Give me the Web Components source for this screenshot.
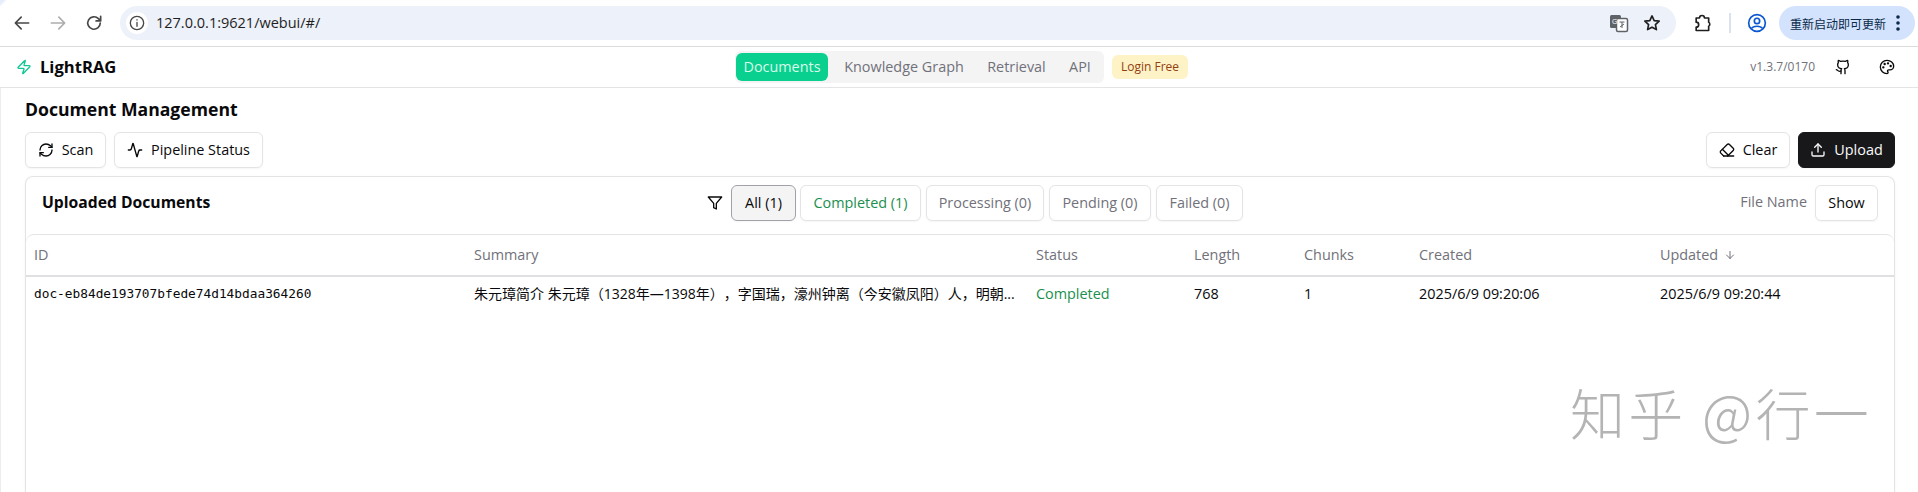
<!DOCTYPE html>
<html><head><meta charset="utf-8"><style>
html,body{margin:0;padding:0;background:#fff;height:100%;overflow:hidden}
body{font-family:"Open Sans","Noto Sans CJK SC",sans-serif;color:#09090b;width:1918px;height:492px;position:relative}
</style></head><body>
<browser-bar></browser-bar>
<app-header></app-header>
<doc-page></doc-page>
<water-mark>知乎 @行一</water-mark>
<script>
const ICON='fill="none" stroke="currentColor" stroke-width="2" stroke-linecap="round" stroke-linejoin="round"';
function define(name,html){customElements.define(name,class extends HTMLElement{constructor(){super();this.attachShadow({mode:'open'}).innerHTML=html;}});}
define('browser-bar',`<style>
:host{display:flex;align-items:center;height:46px;border-bottom:1px solid #dcdcdc;background:#fff;padding-left:12px;color:#474747;position:relative}
.n{width:20px;height:20px;margin-right:16px;flex:none}
.pill{flex:none;width:1556px;height:34px;border-radius:17px;background:#edf1f9;display:flex;align-items:center;padding:0 0 0 6px;box-sizing:border-box}
.info{width:22px;height:22px;border-radius:50%;background:#fff;display:flex;align-items:center;justify-content:center;flex:none}
.url{margin-left:8px;font:14.5px "Open Sans",sans-serif;color:#1f1f1f;flex:1;padding-bottom:1px}
.pi{width:20px;height:20px;flex:none}
.sq{width:2px;height:20px;background:#d9e2ee;margin:0 16px 0 17px}
.upd{margin-left:12px;width:136px;height:34px;border-radius:17px;background:#d3e3fd;display:flex;align-items:center;padding-left:11px;box-sizing:border-box;font:12px "Noto Sans CJK SC",sans-serif;color:#0b2a4a}
.corner{position:absolute;left:0;top:0;width:8px;height:6px;background:linear-gradient(135deg,#e6eefb 0 30%,transparent 55%)}
</style><span class="corner"></span>
<svg class="n" viewBox="0 0 24 24" ${ICON}><path d="M20 12H5M11 5l-7 7 7 7"/></svg>
<svg class="n" style="color:#adadad" viewBox="0 0 24 24" ${ICON}><path d="M4 12h15M13 5l7 7-7 7"/></svg>
<svg class="n" viewBox="0 0 24 24" ${ICON}><path d="M19.5 12a7.5 7.5 0 1 1-2.2-5.3L20 9.5M20 4v5.5h-5.5"/></svg>
<div class="pill"><span class="info"><svg width="16" height="16" viewBox="0 0 24 24" ${ICON}><circle cx="12" cy="12" r="10"/><path d="M12 11v6M12 7v.5"/></svg></span><span class="url">127.0.0.1:9621/webui/#/</span>
<svg class="pi" style="margin-right:13px" viewBox="0 0 20 20"><rect x="1" y="2" width="11" height="13" rx="1.5" fill="#5f6368"/><rect x="7.5" y="5.5" width="11" height="13" rx="1.5" fill="#fff" stroke="#5f6368" stroke-width="1.5"/><text x="3" y="11" font-size="7" fill="#fff" font-family="Liberation Sans">G</text><path d="M10.5 9h5M13 9v6M11 14l4-3" stroke="#5f6368" fill="none"/></svg>
<svg class="pi" style="margin-right:14px" viewBox="0 0 24 24" fill="none" stroke="#1f1f1f" stroke-width="2" stroke-linejoin="round"><path d="M12 3.5l2.6 5.6 6 .7-4.5 4.1 1.2 6L12 17l-5.3 2.9 1.2-6-4.5-4.1 6-.7z"/></svg></div>
<svg class="pi" style="margin-left:16px" viewBox="0 0 24 24" fill="none" stroke="#1f1f1f" stroke-width="2" stroke-linejoin="round"><path d="M5 6h4a3 3 0 0 1 6 0h5v5a3 3 0 0 1 0 5v5H5v-4a3 3 0 0 0 0-6z"/></svg>
<span class="sq"></span>
<svg class="pi" viewBox="0 0 24 24" fill="none" stroke="#0b57d0" stroke-width="2"><circle cx="12" cy="12" r="10"/><circle cx="12" cy="9.5" r="3.2"/><path d="M5.5 18.5c2-3.500 11-3.500 13 0"/></svg>
<div class="upd">重新启动即可更新<svg style="margin-left:4px" width="16" height="20" viewBox="0 0 16 20" fill="#0b2a4a"><circle cx="8" cy="4" r="1.800"/><circle cx="8" cy="10" r="1.800"/><circle cx="8" cy="16" r="1.800"/></svg></div>`);

define('nav-tab',`<style>
:host{display:inline-flex;align-items:center;justify-content:center;height:28px;box-sizing:border-box;padding-bottom:2px;border-radius:6px;font-size:14.4px;color:#71717a;margin-right:8px;white-space:nowrap;flex:none}
:host([active]){background:#0ad08f;color:#d8fbea}
</style><slot></slot>`);

define('app-header',`<style>
:host{display:flex;align-items:center;height:40px;border-bottom:1px solid #e4e4e7;position:relative;padding-left:16px}
.logo{display:flex;align-items:center;gap:8px;font-size:16.6px;font-weight:700;width:719px;flex:none}
.logo span{padding-bottom:2px}
.nav{display:flex;align-items:center;height:32px;padding:0 1px;background:#f4f4f5;border-radius:6px;width:369px;box-sizing:border-box}
.badge{margin-left:8px;height:24px;width:76px;box-sizing:border-box;padding-bottom:1px;display:flex;align-items:center;justify-content:center;background:#fef3c7;color:#92400e;border-radius:6px;font-size:12px}
.right{margin-left:auto;display:flex;align-items:center;color:#71717a;font-size:12px}
.right span{padding-bottom:2px;margin-right:1px}
.ic{color:#09090b;width:16px;height:16px;flex:none}
</style>
<div class="logo"><svg width="16" height="16" viewBox="0 0 24 24" fill="none" stroke="#10c795" stroke-width="2" stroke-linecap="round" stroke-linejoin="round"><path d="M4 14a1 1 0 0 1-.78-1.63l9.9-10.2a.5.5 0 0 1 .86.46l-1.920 6.020A1 1 0 0 0 13 10h7a1 1 0 0 1 .78 1.630l-9.900 10.200a.5.5 0 0 1-.86-.46l1.920-6.020A1 1 0 0 0 11 14z"/></svg><span>LightRAG</span></div>
<div class="nav"><nav-tab active style="width:92px">Documents</nav-tab><nav-tab style="width:136px">Knowledge Graph</nav-tab><nav-tab style="width:73px">Retrieval</nav-tab><nav-tab style="width:38px;margin:0">API</nav-tab></div>
<div class="badge">Login Free</div>
<div class="right"><span>v1.3.7/0170</span>
<svg class="ic" style="margin-left:19px" viewBox="0 0 24 24" ${ICON}><path d="M15 22v-4a4.800 4.800 0 0 0-1-3.500c3 0 6-2 6-5.500.08-1.250-.27-2.480-1-3.500.28-1.150.28-2.350 0-3.500 0 0-1 0-3 1.500-2.640-.5-5.360-.5-8 0C6 2 5 2 5 2c-.3 1.150-.3 2.350 0 3.500A5.400 5.400 0 0 0 4 9c0 3.500 3 5.500 6 5.500-.39.490-.68 1.050-.85 1.650-.17.600-.22 1.230-.15 1.850v4"/><path d="M9 18c-4.510 2-5-2-7-2"/></svg>
<svg class="ic" style="margin:0 23px 0 28px" viewBox="0 0 24 24" ${ICON}><circle cx="13.500" cy="6.500" r=".8" fill="currentColor"/><circle cx="17.500" cy="10.500" r=".8" fill="currentColor"/><circle cx="8.500" cy="7.500" r=".8" fill="currentColor"/><circle cx="6.500" cy="12.500" r=".8" fill="currentColor"/><path d="M12 2C6.500 2 2 6.500 2 12s4.500 10 10 10c.926 0 1.648-.746 1.648-1.688 0-.437-.18-.835-.437-1.125-.290-.290-.438-.652-.438-1.125a1.640 1.640 0 0 1 1.668-1.668h1.996c3.051 0 5.555-2.503 5.555-5.554C21.965 6.012 17.461 2 12 2z"/></svg></div>`);

define('ui-button',`<style>
:host{display:inline-flex;align-items:center;justify-content:center;gap:8px;height:36px;box-sizing:border-box;padding-bottom:1px;border:1px solid #e4e4e7;border-radius:6px;background:#fff;font-size:14.4px;color:#09090b;box-shadow:0 1px 2px rgba(0,0,0,.04);white-space:nowrap;flex:none}
:host([dark]){background:#18181b;color:#fafafa;border-color:#18181b}
:host([sel]){background:#f4f4f5;border-color:#a1a1aa}
:host([muted]){color:#71717a}
:host([ok]){color:#1a8f4e}
::slotted(svg){width:16px;height:16px;flex:none}
</style><slot></slot>`);

define('data-table',`<style>
:host{display:block;border-top:1px solid #e4e4e7;border-radius:8px 8px 0 0;font-size:14.4px}
.row{display:grid;grid-template-columns:440px 562px 158px 110px 115px 241px 1fr}
.row>div{padding-left:8px;white-space:nowrap;overflow:hidden}
.head{height:40px;box-sizing:content-box;align-items:center;border-bottom:2px solid #e0e0e3;color:#71717a}
.head>div{padding-bottom:2px}
.body{height:34px;align-items:center}
.body>div{padding-bottom:2px}
.mono{font:12.8px "DejaVu Sans Mono",monospace}
.sum{font-size:14px;text-spacing-trim:space-all}
.ok{color:#1a8f4e}
.arrow{width:12px;height:12px;margin-left:2px;vertical-align:-1px}
</style>
<div class="row head"><div>ID</div><div>Summary</div><div>Status</div><div>Length</div><div>Chunks</div><div>Created</div><div>Updated <svg class="arrow" viewBox="0 0 24 24" ${ICON}><path d="M12 5v14M19 12l-7 7-7-7"/></svg></div></div>
<div class="row body"><div class="mono">doc-eb84de193707bfede74d14bdaa364260</div><div class="sum">朱元璋简介 朱元璋（1328年—1398年），字国瑞，濠州钟离（今安徽凤阳）人，明朝...</div><div class="ok">Completed</div><div>768</div><div>1</div><div>2025/6/9 09:20:06</div><div>2025/6/9 09:20:44</div></div>`);

define('doc-page',`<style>
:host{display:block;padding:0 23px 0 24px;border-left:1px solid #ececec;height:404px;overflow:hidden}
h1{margin:0;height:44px;box-sizing:border-box;padding-bottom:2px;display:flex;align-items:center;font-size:17.6px;font-weight:700}
.bar{display:flex;gap:8px;height:36px}
.sp{flex:1}
.card{margin-top:8px;border:1px solid #e4e4e7;border-bottom:0;border-radius:8px 8px 0 0;height:320px;box-shadow:0 1px 3px rgba(0,0,0,.05)}
.top{height:57px;box-sizing:border-box;padding:8px 0 0 16px;display:flex;align-items:flex-start}
.title{font-size:15.7px;font-weight:700;width:660px;flex:none;line-height:35px}
.fi{width:16px;height:16px;margin:10px 9px 0 4px;flex:none}
.fs{display:flex;gap:5px}
.fn{margin-left:auto;color:#71717a;font-size:14.4px;margin-right:8px;line-height:34px}
</style>
<h1>Document Management</h1>
<div class="bar">
<ui-button style="width:81px"><svg viewBox="0 0 24 24" ${ICON}><path d="M3 12a9 9 0 0 1 9-9 9.750 9.750 0 0 1 6.740 2.740L21 8"/><path d="M21 3v5h-5"/><path d="M21 12a9 9 0 0 1-9 9 9.750 9.750 0 0 1-6.740-2.740L3 16"/><path d="M8 16H3v5"/></svg>Scan</ui-button>
<ui-button style="width:149px"><svg viewBox="0 0 24 24" ${ICON}><path d="M22 12h-2.480a2 2 0 0 0-1.930 1.460l-2.350 8.360a.25.25 0 0 1-.48 0L9.240 2.180a.25.25 0 0 0-.48 0l-2.350 8.360A2 2 0 0 1 4.490 12H2"/></svg>Pipeline Status</ui-button>
<span class="sp"></span>
<ui-button style="width:84px"><svg viewBox="0 0 24 24" ${ICON}><path d="m7 21-4.300-4.300c-1-1-1-2.500 0-3.400l9.600-9.600c1-1 2.500-1 3.400 0l5.600 5.600c1 1 1 2.500 0 3.400L13 21"/><path d="M22 21H7"/><path d="m5 11 9 9"/></svg>Clear</ui-button>
<ui-button dark style="width:97px"><svg viewBox="0 0 24 24" ${ICON}><path d="M21 15v4a2 2 0 0 1-2 2H5a2 2 0 0 1-2-2v-4"/><path d="m17 8-5-5-5 5"/><path d="M12 3v12"/></svg>Upload</ui-button>
</div>
<div class="card"><div class="top"><div class="title">Uploaded Documents</div>
<svg class="fi" style="transform:translateX(1px)" viewBox="0 0 24 24" ${ICON}><path d="M22 3H2l8 9.460V19l4 2v-8.540z"/></svg>
<div class="fs"><ui-button sel style="width:65px;margin-right:-1px">All (1)</ui-button><ui-button ok style="width:121px">Completed (1)</ui-button><ui-button muted style="width:118px">Processing (0)</ui-button><ui-button muted style="width:102px">Pending (0)</ui-button><ui-button muted style="width:87px">Failed (0)</ui-button></div>
<span class="fn">File Name</span><ui-button style="width:63px;margin-right:16px">Show</ui-button></div>
<data-table></data-table></div>`);

define('water-mark',`<style>
:host{position:absolute;left:1570px;top:378px;font:300 55px/1.2 "Noto Sans CJK SC",sans-serif;letter-spacing:3.3px;color:#b4b4b4;white-space:nowrap}
</style><slot></slot>`);
</script></body></html>
